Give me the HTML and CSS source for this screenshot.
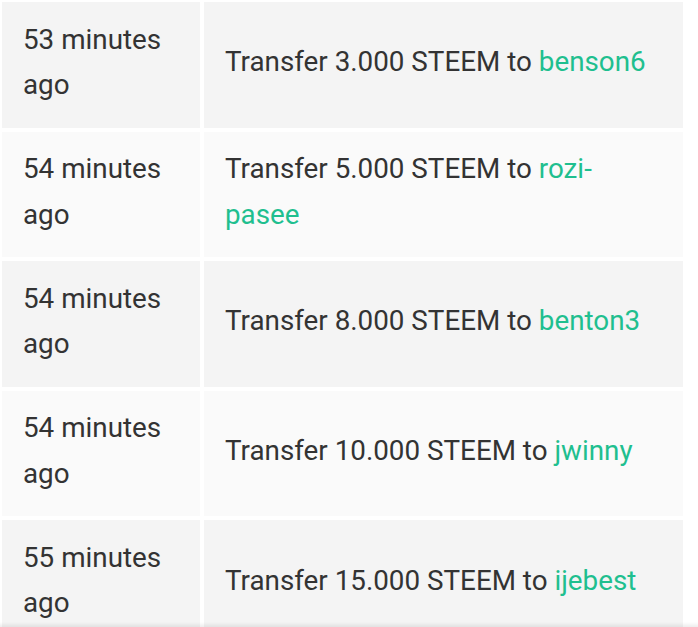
FILE: index.html
```html
<!DOCTYPE html>
<html lang="en">
<head>
<meta charset="utf-8">
<title>Transfers</title>
<link rel="stylesheet" href="styles.css">
</head>
<body>
<table class="history">
  <tbody>
    <tr class="row odd">
      <td class="time">53 minutes ago</td>
      <td class="desc">Transfer 3.000 STEEM to <a class="user" href="#">benson6</a></td>
    </tr>
    <tr class="row even">
      <td class="time">54 minutes ago</td>
      <td class="desc">Transfer 5.000 STEEM to <a class="user" href="#">rozi-pasee</a></td>
    </tr>
    <tr class="row odd">
      <td class="time">54 minutes ago</td>
      <td class="desc">Transfer 8.000 STEEM to <a class="user" href="#">benton3</a></td>
    </tr>
    <tr class="row even">
      <td class="time">54 minutes ago</td>
      <td class="desc">Transfer 10.000 STEEM to <a class="user" href="#">jwinny</a></td>
    </tr>
    <tr class="row odd">
      <td class="time">55 minutes ago</td>
      <td class="desc">Transfer 15.000 STEEM to <a class="user" href="#">ijebest</a></td>
    </tr>
  </tbody>
</table>
<div class="bottom-shade"></div>
</body>
</html>
```
FILE: styles.css
```css
html, body {
  margin: 0;
  padding: 0;
  background: #ffffff;
}

body {
  font-family: Roboto, "Noto Sans", "Liberation Sans", sans-serif;
  font-size: 27.8px;
  line-height: 45.5px;
  color: #333333;
  overflow: hidden;
}

.history {
  border-collapse: separate;
  border-spacing: 4px;
  margin: -2px;
  table-layout: fixed;
  width: 689px;
}

.history td {
  padding: 14.5px 22px 20.1px 21px;
  vertical-align: middle;
}

.time {
  width: 155px;
}

.desc {
  width: 436px;
}

.odd td {
  background: #f4f4f4;
}

.even td {
  background: #fafafa;
}

.user {
  color: #1fbf8f;
  text-decoration: none;
}

.bottom-shade {
  position: fixed;
  left: 0;
  right: 0;
  bottom: 0;
  height: 5px;
  background: linear-gradient(to bottom, rgba(0,0,0,0), rgba(0,0,0,0.07));
  pointer-events: none;
}
```
